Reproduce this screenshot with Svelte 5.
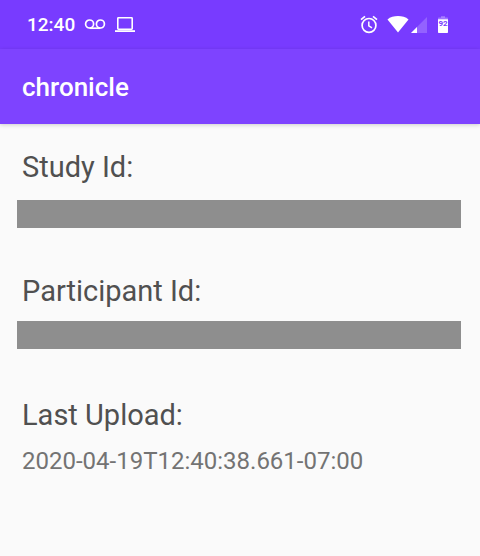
<script>
  const time = '12:40';
  const battery = 92;
  const lastUpload = '2020-04-19T12:40:38.661-07:00';
</script>

<div class="screen">
  <div class="status">
    <span class="time">{time}</span>
    <svg class="voicemail" width="22" height="22" viewBox="0 0 22 22" aria-hidden="true">
      <g fill="none" stroke="currentColor" stroke-width="1.7">
        <circle cx="5.6" cy="10" r="4" />
        <circle cx="16.4" cy="10" r="4" />
        <path d="M5.6 14.2H16.4" />
      </g>
    </svg>
    <svg class="laptop" width="22" height="22" viewBox="0 0 22 22" aria-hidden="true">
      <rect x="3.8" y="3.8" width="14.4" height="11.4" rx="0.6" fill="none" stroke="currentColor" stroke-width="1.6" />
      <path d="M1 16.2H21V18H1z" fill="currentColor" />
    </svg>
    <svg class="alarm" width="20" height="20" viewBox="0 0 20 20" aria-hidden="true">
      <g fill="none" stroke="currentColor" stroke-width="1.7">
        <circle cx="10" cy="10.4" r="6.9" />
        <path d="M2 4.7L6 1.4M14 1.4L18 4.7" />
        <path d="M9.8 6.4V10.8L13 12.8" stroke-width="1.5" />
      </g>
    </svg>
    <svg class="wifi" width="22" height="20" viewBox="0 0 22 20" aria-hidden="true">
      <path d="M0.5 4.4C6 0 16 0 21.5 4.4L11 17.4z" fill="currentColor" />
    </svg>
    <svg class="signal" width="16" height="20" viewBox="0 0 16 20" aria-hidden="true">
      <path d="M0 18L16 2V18z" fill="currentColor" opacity="0.2" />
      <path d="M0 18L6 12V18z" fill="currentColor" />
    </svg>
    <span class="battery">
      <svg width="10" height="20" viewBox="0 0 10 20" aria-hidden="true">
        <path d="M3 1H7V3H3z" fill="currentColor" opacity="0.25" />
        <path d="M0.8 2.6H9.2Q10 2.6 10 3.4V4.4H0V3.4Q0 2.6 0.8 2.6z" fill="currentColor" opacity="0.3" />
        <path d="M0 4.2H10V17.2Q10 18 9.2 18H0.8Q0 18 0 17.2z" fill="currentColor" />
      </svg>
      <span class="level">{battery}</span>
    </span>
  </div>

  <header><h1>chronicle</h1></header>

  <main>
    <section>
      <h2>Study Id:</h2>
      <div class="redacted study"></div>
    </section>
    <section>
      <h2>Participant Id:</h2>
      <div class="redacted"></div>
    </section>
    <section>
      <h2>Last Upload:</h2>
      <p><time datetime={lastUpload}>{lastUpload}</time></p>
    </section>
  </main>
</div>

<style>
  :global(body) {
    margin: 0;
    background: #fafafa;
  }
  .screen {
    font-family: Roboto, 'Noto Sans', sans-serif;
    background: #fafafa;
    min-height: 100vh;
  }
  .status {
    display: flex;
    align-items: center;
    box-sizing: border-box;
    height: 49px;
    padding: 0 32px 0 27px;
    background: #783bff;
    color: #fff;
  }
  .time {
    font-size: 19px;
    font-weight: 500;
    line-height: 24px;
    margin-right: 9px;
  }
  .laptop {
    margin-left: 8px;
  }
  .alarm {
    margin-left: auto;
  }
  .wifi {
    margin-left: 8px;
  }
  .signal {
    margin-left: 2px;
  }
  .battery {
    display: flex;
    position: relative;
    margin-left: 11px;
  }
  .level {
    position: absolute;
    inset: 4px 0 auto;
    color: #783bff;
    font-size: 8px;
    font-weight: 700;
    line-height: 10px;
    text-align: center;
  }
  header {
    display: flex;
    align-items: center;
    height: 75px;
    padding: 0 22px;
    background: #7e43ff;
    color: #fff;
    box-shadow: 0 1px 4px rgba(0, 0, 0, 0.18);
  }
  h1 {
    margin: 0;
    font-size: 26px;
    font-weight: 500;
    line-height: 32px;
  }
  main {
    padding: 25px 19px 24px 17px;
  }
  section {
    min-height: 124px;
  }
  h2 {
    margin: 0;
    padding-left: 5px;
    color: #505050;
    font-size: 29px;
    font-weight: 400;
    line-height: 36px;
  }
  .redacted {
    height: 28px;
    margin-top: 12px;
    background: #8e8e8e;
  }
  .redacted.study {
    margin-top: 15px;
  }
  p {
    margin: 14px 0 0;
    padding-left: 5px;
    color: #737373;
    font-size: 24px;
    line-height: 28px;
  }
</style>
